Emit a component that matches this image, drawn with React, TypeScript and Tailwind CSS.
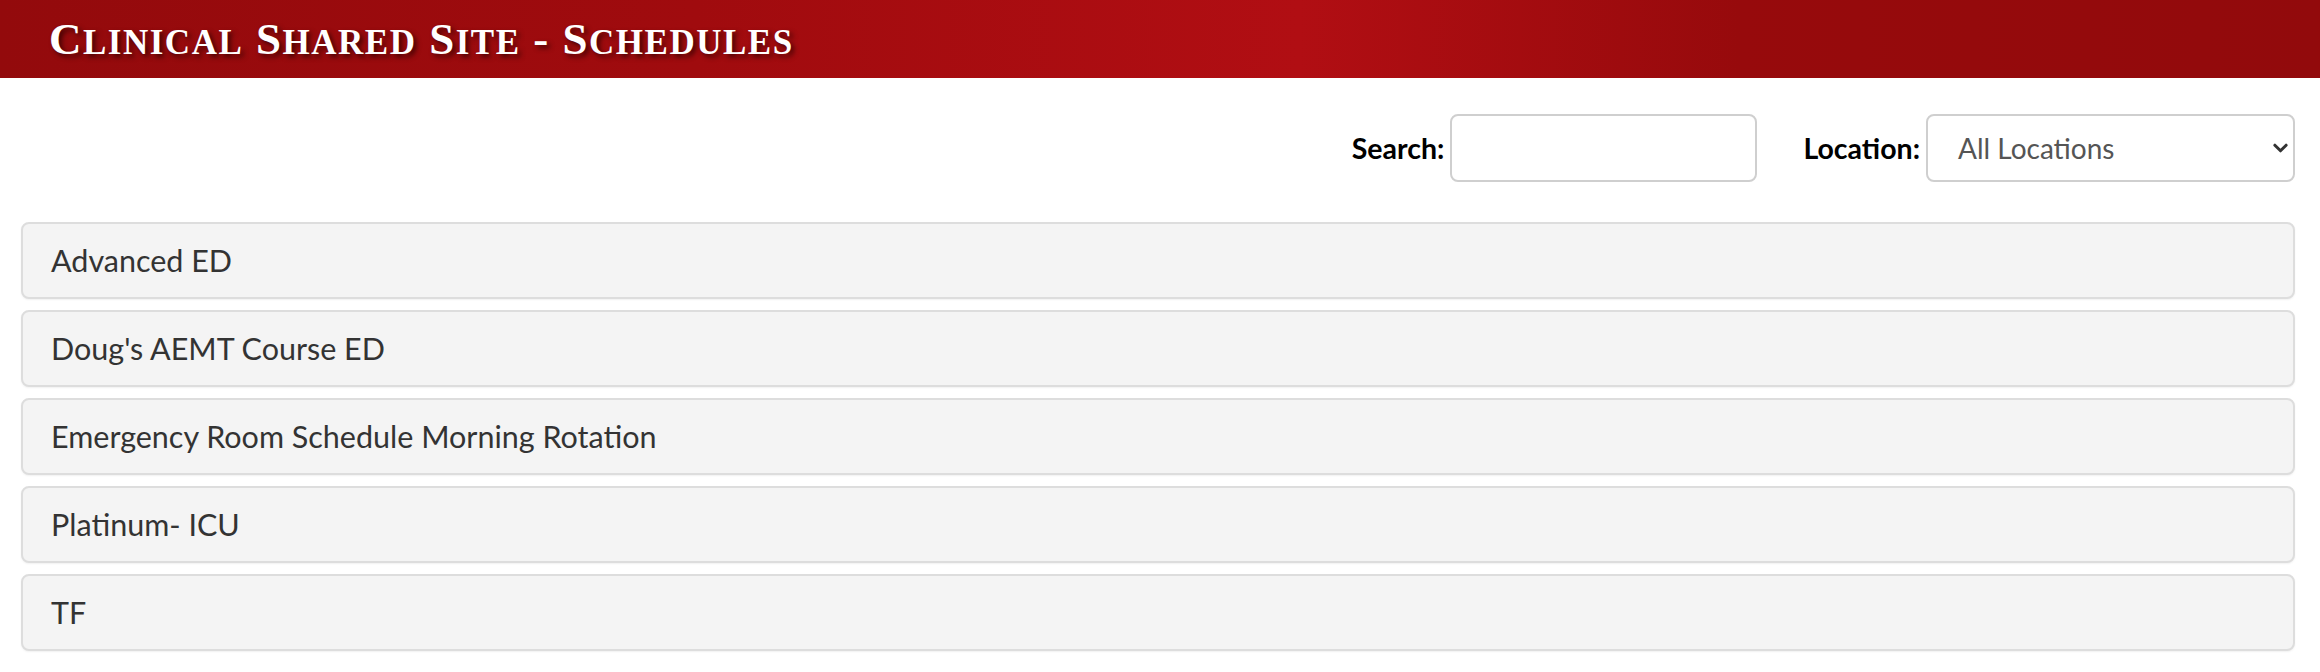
import React from "react";

const schedules = [
  "Advanced ED",
  "Doug's AEMT Course ED",
  "Emergency Room Schedule Morning Rotation",
  "Platinum- ICU",
  "TF",
];

const title = "Clinical Shared Site - Schedules";

// hand-made small caps: first letter large, rest smaller uppercase
const SmallCapsTitle = ({ text }: { text: string }) => (
  <h1 className="font-['Liberation_Serif',serif] font-bold text-white leading-none tracking-[1.5px] [text-shadow:3px_3px_5px_rgba(40,0,0,0.75)] whitespace-pre">
    {text.split(" ").map((word, i) => (
      <React.Fragment key={i}>
        {i > 0 && <span className="text-[45px]"> </span>}
        <span className="text-[45px]">{word.charAt(0).toUpperCase()}</span>
        <span className="text-[35px] uppercase">{word.slice(1)}</span>
      </React.Fragment>
    ))}
  </h1>
);

export default function App() {
  return (
    <div className="min-h-screen bg-white font-['Lato',sans-serif]">
      {/* HEADER */}
      <div className="h-[78px] flex items-center pl-[49px] bg-[linear-gradient(90deg,#930a0c_0%,#a00b0e_30%,#b10e13_56%,#970a0c_75%,#920a0c_100%)]">
        <SmallCapsTitle text={title} />
      </div>

      {/* FILTERS */}
      <div className="flex justify-end items-center pt-[36px] pr-[25px] gap-[46px]">
        <div className="flex items-center gap-[6px]">
          <label className="text-[28.5px] font-bold text-black">Search:</label>
          <input
            type="text"
            className="w-[307px] h-[68px] rounded-[8px] border-2 border-[#cfcfcf] bg-white outline-none"
          />
        </div>
        <div className="flex items-center gap-[6px]">
          <label className="text-[28.5px] font-bold text-black">Location:</label>
          <div className="relative w-[369px] h-[68px] rounded-[8px] border-2 border-[#cfcfcf] bg-white flex items-center pl-[30px]">
            <span className="text-[28px] text-[#555]">All Locations</span>
            <svg
              className="absolute right-[5px] top-1/2 -translate-y-1/2 w-[15px] h-[15px]"
              viewBox="0 0 16 16"
              fill="none"
              stroke="#333"
              strokeWidth={3.2}
            >
              <path d="M2 5l6 6 6-6" strokeLinecap="round" strokeLinejoin="round" />
            </svg>
          </div>
        </div>
      </div>

      {/* SCHEDULE LIST */}
      <div className="flex flex-col gap-[11px] pt-[40px] pl-[21px] pr-[25px] pb-[20px]">
        {schedules.map((name) => (
          <div
            key={name}
            className="h-[77px] flex items-center pl-[28px] rounded-[8px] border-2 border-[#dddddd] bg-[#f4f4f4] shadow-[0_1px_2px_rgba(0,0,0,0.06)]"
          >
            <span className="text-[30.5px] text-[#333]">{name}</span>
          </div>
        ))}
      </div>
    </div>
  );
}
